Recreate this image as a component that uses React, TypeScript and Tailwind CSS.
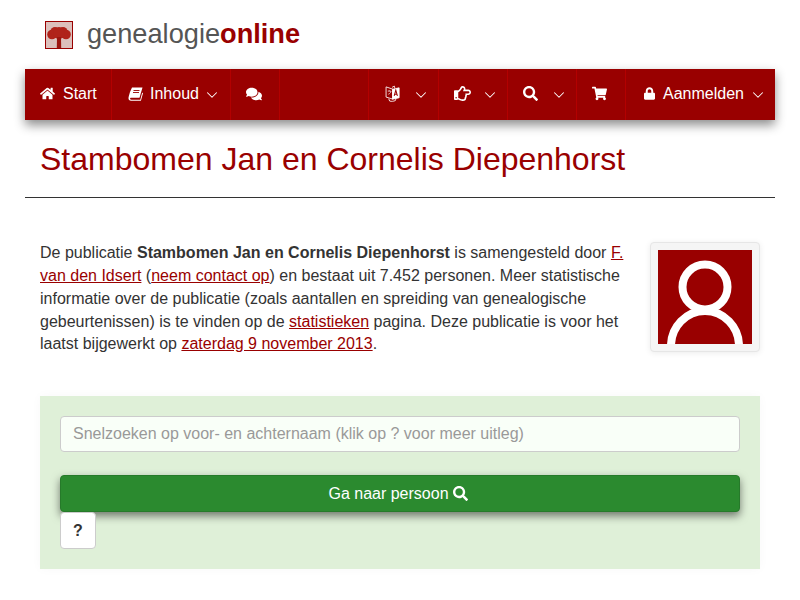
import { FaComments, FaHome, FaLock, FaRegHandPointRight, FaSearch, FaShoppingCart } from 'react-icons/fa';
import { LuChevronDown } from 'react-icons/lu';

function Chevron({ className }: { className: string }) {
  return <LuChevronDown className={`w-[18px] h-[18px] mt-[2px] ${className}`} strokeWidth={1.4} />;
}

function BookIcon() {
  return (
    <svg viewBox="0 0 15 14" className="w-[15px] h-[14px]" fill="white">
      <path d="M4 .5h10.500l-3 10.300H3.200c-.9 0-1.300.7-1.100 1.200.2.500.6.800 1.200.8h9l1.900-7.300.8.800-2.100 7.500H3.100C1.500 13.800.2 12.700.5 10.800.7 9.800 1 8.500 2 5z" />
      <path d="M5.500 3.500h6M5 5.500h6" stroke="#990000" strokeWidth="0.9" />
    </svg>
  );
}

function LanguageIcon() {
  return (
    <svg viewBox="0 0 15 18" className="w-[15px] h-[17px]" fill="none" stroke="white" strokeWidth="0.9">
      <path d="M.7 2 8 4.500V15L.7 12.800z" />
      <path d="M7.500 4.500 14.500 3v10.500l-7 1.500z" fill="white" />
      <path d="M7 2.500 9.500 1.200 10 3.500M3.500 14.500l1 2.500c2 .6 4 .3 6-.5l.7-2" />
      <path d="M2.500 6.500h3.500M4 5.500v1M3 9.800c1.500-.5 2.500-1.500 3-3.300" strokeWidth="0.7" />
      <path d="M9.300 11.500l1.700-6 1.700 6M9.800 9.800h2.400" stroke="#990000" strokeWidth="1.100" />
    </svg>
  );
}

function NavItem({ className, children, last }: { className: string; children?: React.ReactNode; last?: boolean }) {
  return (
    <div className={`${className} flex items-center shrink-0 h-full pb-[2px] ${last ? '' : 'border-r border-[#b30000]'}`}>
      {children}
    </div>
  );
}

export default function App() {
  return (
    <div className="w-[800px] h-[600px] overflow-hidden bg-white font-['Liberation_Sans',Arial,sans-serif] text-[16px] text-[#333333]">
      {/* logo */}
      <div className="h-[69px] pl-[45px] pt-[21px] flex items-start">
        <div className="w-[28px] h-[28px] border border-[#990000] bg-[#dcc0bc] flex items-center justify-center">
          <svg viewBox="0 0 26 26" className="w-[26px] h-[26px]">
            <g fill="#b0231a">
              <circle cx="6" cy="12.500" r="4.800" />
              <circle cx="20" cy="12.500" r="4.800" />
              <circle cx="9" cy="9.500" r="4.500" />
              <circle cx="17" cy="9.500" r="4.500" />
              <circle cx="13" cy="11" r="6" />
            </g>
            <path d="M11 15h4l.2 11h-4.400z" fill="#9c1610" />
          </svg>
        </div>
        <div className="ml-[14px] text-[27.200px] leading-[28px] mt-[-1px] text-[#555555]">
          genealogie<span className="font-bold text-[#990000]">online</span>
        </div>
      </div>

      {/* menu */}
      <div className="mx-[25px] h-[51px] bg-[#990000] text-white flex items-center shadow-[0_5px_10px_rgba(0,0,0,0.45)]">
        <NavItem className="w-[87px] pl-[15px]">
          <FaHome className="w-[15px] h-[15px] mr-[8px]" />
          <span>Start</span>
        </NavItem>
        <NavItem className="w-[119px] pl-[16px]">
          <span className="mr-[7px]"><BookIcon /></span>
          <span>Inhoud</span>
          <Chevron className="ml-[4.500px]" />
        </NavItem>
        <NavItem className="w-[49px] pl-[15px]">
          <FaComments className="w-[16px] h-[16px]" />
        </NavItem>
        <NavItem className="w-[89px]" />
        <NavItem className="w-[70px] pl-[16px]">
          <LanguageIcon />
          <Chevron className="ml-[11.500px]" />
        </NavItem>
        <NavItem className="w-[69px] pl-[15px]">
          <FaRegHandPointRight className="w-[17px] h-[17px]" />
          <Chevron className="ml-[9.500px]" />
        </NavItem>
        <NavItem className="w-[69px] pl-[15px]">
          <FaSearch className="w-[15px] h-[15px]" />
          <Chevron className="ml-[11.500px]" />
        </NavItem>
        <NavItem className="w-[49px] pl-[15px]">
          <FaShoppingCart className="w-[15px] h-[15px]" />
        </NavItem>
        <NavItem className="w-[149px] pl-[18px]" last>
          <FaLock className="w-[11px] h-[13px] mr-[8px]" />
          <span>Aanmelden</span>
          <Chevron className="ml-[5.500px]" />
        </NavItem>
      </div>

      {/* title */}
      <div className="mx-[25px] px-[15px] h-[78px] border-b border-[#333333] pt-[20px]">
        <h1 className="text-[32px] leading-[38px] text-[#990000]">Stambomen Jan en Cornelis Diepenhorst</h1>
      </div>

      {/* intro */}
      <div className="mx-[40px] mt-[44px] flex justify-between items-start">
        <p className="w-[590px] leading-[22.857px]">
          De publicatie <b>Stambomen Jan en Cornelis Diepenhorst</b> is samengesteld door <a className="underline text-[#990000]">F. van den Idsert</a> (<a className="underline text-[#990000]">neem contact op</a>) en bestaat uit 7.452 personen. Meer statistische informatie over de publicatie (zoals aantallen en spreiding van genealogische gebeurtenissen) is te vinden op de <a className="underline text-[#990000]">statistieken</a> pagina. Deze publicatie is voor het laatst bijgewerkt op <a className="underline text-[#990000]">zaterdag 9 november 2013</a>.
        </p>
        <div className="w-[110px] h-[110px] p-[7px] bg-[#f5f5f5] border border-[#e6e6e6] rounded-[4px] shadow-[0_1px_6px_rgba(0,0,0,0.08)]">
          <div className="w-[94px] h-[94px] bg-[#990000] overflow-hidden">
            <svg viewBox="0 0 94 94" className="w-[94px] h-[94px]" fill="none" stroke="white" strokeWidth="8">
              <circle cx="47" cy="37" r="22.500" />
              <path d="M13 96a34 35 0 0 1 68 0" />
            </svg>
          </div>
        </div>
      </div>

      {/* search */}
      <div className="mx-[40px] mt-[40px] h-[173px] bg-[#dff0d8] px-[20px] pt-[20px] shadow-[0_0_10px_rgba(0,0,0,0.03)]">
        <input
          readOnly
          placeholder="Snelzoeken op voor- en achternaam (klik op ? voor meer uitleg)"
          className="block w-full h-[36px] px-[12px] bg-[#f9fff8] border border-[#cccccc] rounded-[4px] text-[16px] outline-none placeholder:text-[#999999]"
        />
        <button className="mt-[23px] w-full h-[37px] pr-[4px] bg-[#2b8a2f] border border-[#267a2a] rounded-[4px] text-white flex items-center justify-center gap-[4px] shadow-[0_4px_8px_rgba(0,0,0,0.5)]">
          Ga naar persoon <FaSearch className="w-[15px] h-[15px]" />
        </button>
        <button className="block w-[36px] h-[37px] bg-white border border-[#cccccc] rounded-[4px] font-bold text-[#333333]">?</button>
      </div>
    </div>
  );
}
